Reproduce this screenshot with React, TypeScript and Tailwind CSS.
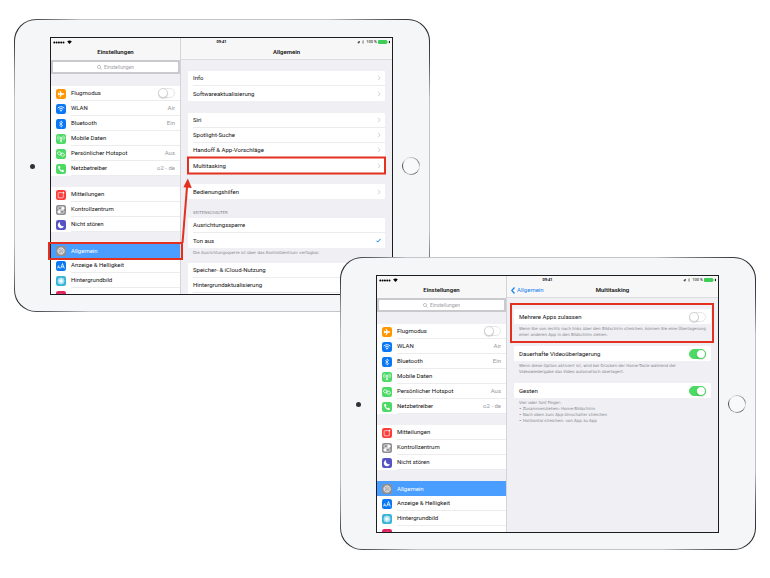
import type { ReactNode } from "react";

type IconName =
  | "plane"
  | "wifi"
  | "bluetooth"
  | "antenna"
  | "hotspot"
  | "phone"
  | "notifications"
  | "control"
  | "moon"
  | "gear"
  | "display"
  | "wallpaper"
  | "sounds";

interface SidebarItem {
  icon: IconName;
  label: string;
  value?: string;
  toggle?: boolean;
  active?: boolean;
}

const sidebarGroups: SidebarItem[][] = [
  [
    { icon: "plane", label: "Flugmodus", toggle: true },
    { icon: "wifi", label: "WLAN", value: "Air" },
    { icon: "bluetooth", label: "Bluetooth", value: "Ein" },
    { icon: "antenna", label: "Mobile Daten" },
    { icon: "hotspot", label: "Persönlicher Hotspot", value: "Aus" },
    { icon: "phone", label: "Netzbetreiber", value: "o2 - de" },
  ],
  [
    { icon: "notifications", label: "Mitteilungen" },
    { icon: "control", label: "Kontrollzentrum" },
    { icon: "moon", label: "Nicht stören" },
  ],
  [
    { icon: "gear", label: "Allgemein", active: true },
    { icon: "display", label: "Anzeige & Helligkeit" },
    { icon: "wallpaper", label: "Hintergrundbild" },
    { icon: "sounds", label: "" },
  ],
];

const iconColors: Record<IconName, string> = {
  plane: "#ff9500",
  wifi: "#0a78f5",
  bluetooth: "#0a78f5",
  antenna: "#4cd964",
  hotspot: "#4cd964",
  phone: "#4cd964",
  notifications: "#fc3d39",
  control: "#8e8e93",
  moon: "#5654c4",
  gear: "#8e8e93",
  display: "#0a78f5",
  wallpaper: "#36b4d8",
  sounds: "#e0245e",
};

const iconShapes: Record<IconName, ReactNode> = {
  plane: (
    <path
      d="M25 15c0-1.200-1.200-1.900-2.400-1.900h-4.800L13 5h-2.600l2.200 8.100H9L7.200 10.500H5l1.200 4.500L5 19.500h2.200L9 16.900h3.600L10.400 25H13l4.800-8.100h4.800c1.200 0 2.400-.7 2.400-1.900z"
      fill="#fff"
    />
  ),
  wifi: (
    <g stroke="#fff" strokeWidth="2.6" fill="none">
      <path d="M5 12.2c5.6-5.4 14.4-5.4 20 0" />
      <path d="M8.6 16.2c3.6-3.4 9.2-3.4 12.8 0" />
      <path d="M12 19l3 3.6 3-3.6c-1.8-1.4-4.2-1.4-6 0z" fill="#fff" strokeWidth="0.8" />
    </g>
  ),
  bluetooth: (
    <path d="M9.5 10.2l10.5 9.6-5 4.6V5.6l5 4.6-10.5 9.6" stroke="#fff" strokeWidth="2" fill="none" />
  ),
  antenna: (
    <g stroke="#fff" strokeWidth="1.8" fill="none">
      <circle cx="15" cy="11.5" r="2.2" fill="#fff" />
      <path d="M15 13v12M12 25l3-9 3 9" />
      <path d="M10.6 16a6 6 0 010-9M19.4 16a6 6 0 000-9M7.4 18.6a10 10 0 010-14M22.6 18.6a10 10 0 000-14" />
    </g>
  ),
  hotspot: (
    <g stroke="#fff" strokeWidth="2.2" fill="none">
      <rect x="4.5" y="9" width="12" height="8.4" rx="4.2" transform="rotate(20 10.5 13)" />
      <rect x="13.2" y="12.6" width="12" height="8.4" rx="4.2" transform="rotate(20 19.5 17)" />
    </g>
  ),
  phone: (
    <path
      d="M9.6 5.6L6.4 8c-.8 5.600 7.600 16.200 14.800 16.400L24 21.600c.4-.6.3-1.200-.2-1.600l-3.600-2.600c-.6-.4-1.200-.3-1.700.2l-1.500 1.600c-2.400-.8-5.200-4-6-6.400l1.700-1.400c.5-.5.7-1 .3-1.700L11.200 6c-.4-.6-1-.8-1.600-.4z"
      fill="#fff"
    />
  ),
  notifications: (
    <g>
      <rect x="6.500" y="8" width="15.500" height="15.500" rx="2.500" stroke="#fff" strokeWidth="2" fill="none" />
      <circle cx="22" cy="8" r="4.600" fill="#fc3d39" />
      <circle cx="22" cy="8" r="3" fill="#fff" />
    </g>
  ),
  control: (
    <g stroke="#fff" strokeWidth="1.800" fill="none">
      <rect x="5.500" y="5.500" width="19" height="8" rx="4" />
      <circle cx="20.500" cy="9.500" r="3.600" fill="#fff" />
      <rect x="5.500" y="16.500" width="19" height="8" rx="4" />
      <circle cx="9.500" cy="20.500" r="3.600" fill="#fff" />
    </g>
  ),
  moon: <path d="M12.500 6a9.500 9.500 0 1011.400 12.200A9.200 9.200 0 0112.500 6z" fill="#fff" />,
  gear: (
    <g stroke="#fff" fill="none">
      <circle cx="15" cy="15" r="9.600" strokeWidth="2.800" strokeDasharray="2 1" />
      <circle cx="15" cy="15" r="8.400" strokeWidth="1.600" />
      <circle cx="15" cy="15" r="4" strokeWidth="1.800" />
      <path d="M17 18.500l3 4.500M17 11.500l3-4.500M11 15H6" strokeWidth="1.500" />
    </g>
  ),
  display: (
    <g stroke="#fff" strokeWidth="2.400" fill="none">
      <path d="M14 22.500l5.500-15 5.500 15M16 17.500h7" />
      <path d="M4.500 22l3.300-8.500L11 22M5.500 19.300h4.600" strokeWidth="1.900" />
    </g>
  ),
  wallpaper: (
    <g stroke="#fff" fill="none" strokeWidth="1.600">
      <circle cx="15" cy="15" r="3" fill="#fff" />
      <ellipse cx="15" cy="15" rx="4" ry="10" />
      <ellipse cx="15" cy="15" rx="4" ry="10" transform="rotate(45 15 15)" />
      <ellipse cx="15" cy="15" rx="4" ry="10" transform="rotate(90 15 15)" />
      <ellipse cx="15" cy="15" rx="4" ry="10" transform="rotate(135 15 15)" />
    </g>
  ),
  sounds: <path d="M6 12h4l6-5v16l-6-5H6z" fill="#fff" />,
};

function AppIcon({ name }: { name: IconName }) {
  return (
    <svg viewBox="0 0 30 30" className="size-2.5 shrink-0" aria-hidden="true">
      <rect width="30" height="30" rx="6.500" fill={iconColors[name]} />
      {iconShapes[name]}
    </svg>
  );
}

function Chevron() {
  return (
    <svg viewBox="0 0 4 6" className="h-1.5 w-1 shrink-0" aria-hidden="true">
      <path d="M1 .8L3.200 3 1 5.200" stroke="#c3c3c8" strokeWidth=".8" fill="none" />
    </svg>
  );
}

function Toggle({ label, on = false }: { label: string; on?: boolean }) {
  return (
    <input
      type="checkbox"
      role="switch"
      aria-label={label}
      defaultChecked={on}
      className="relative h-2.5 w-[17px] shrink-0 appearance-none rounded-full border border-[#e6e6e9] bg-white before:absolute before:-top-px before:-left-px before:size-2.5 before:rounded-full before:border before:border-[#d4d4d8] before:bg-white before:shadow-[0_1px_1px_rgba(0,0,0,0.15)] checked:border-[#4cd964] checked:bg-[#4cd964] checked:before:left-[6px] checked:before:border-[#4cd964]"
    />
  );
}

function StatusBar() {
  return (
    <div className="absolute inset-x-0 top-0 grid h-2 grid-cols-3 items-center px-0.5 text-[4px] leading-[8px] font-semibold text-black">
      <div className="flex items-center gap-0.5">
        <svg viewBox="0 0 12 3" className="h-[3px] w-3" aria-label="Signal">
          {[1.3, 3.6, 5.9, 8.2, 10.5].map((x) => (
            <circle key={x} cx={x} cy="1.500" r="1" />
          ))}
        </svg>
        <svg viewBox="0 0 12 9" className="h-[4px] w-[5px]" aria-label="WLAN">
          <path d="M.5 3C3.500 0 8.500 0 11.500 3L6 9z" />
        </svg>
      </div>
      <span className="text-center">09:41</span>
      <div className="flex items-center justify-end gap-px font-normal">
        <svg viewBox="0 0 8 8" className="size-[3px]" aria-hidden="true">
          <path d="M8 0L5 8 4 4 0 3z" />
        </svg>
        <svg viewBox="0 0 6 10" className="h-[4px] w-1" aria-hidden="true">
          <path d="M1 2.500l4 5L3 9.500v-9l2 2-4 5" stroke="#777" fill="none" />
        </svg>
        <span>100 %</span>
        <svg viewBox="0 0 12 4" className="h-1 w-3" aria-label="Batterie">
          <rect width="9" height="4" rx="1" fill="#3fce55" />
          <rect x="9.300" y="1.300" width=".7" height="1.400" fill="#3fce55" />
          <path d="M12 .5v3L10.500 2z" />
        </svg>
      </div>
    </div>
  );
}

function SidebarRow({ item }: { item: SidebarItem }) {
  const body = (
    <>
      <AppIcon name={item.icon} />
      <span
        className={
          item.active
            ? "flex h-full flex-1 items-center justify-between pr-[5px] text-white"
            : "flex h-full flex-1 items-center justify-between border-b border-[#ececef] pr-[5px] text-[#111]"
        }
      >
        {item.label}
        {item.value && <span className="text-[#98989d]">{item.value}</span>}
        {item.toggle && <Toggle label={item.label} />}
      </span>
    </>
  );
  const base = "flex h-[15px] items-center gap-[5px] pl-[5px]";
  if (item.toggle) {
    return <label className={base}>{body}</label>;
  }
  return (
    <a href="#" className={item.active ? `${base} bg-[#4a9eff]` : base}>
      {body}
    </a>
  );
}

function Sidebar() {
  return (
    <aside className="flex w-[130px] shrink-0 flex-col border-r border-[#d3d3d8]">
      <h2 className="h-[22px] shrink-0 bg-[#f7f7f8] pt-2 text-center leading-[12px] font-semibold">
        Einstellungen
      </h2>
      <div className="h-3.5 shrink-0 bg-[#c9c9ce] p-0.5">
        <label className="flex h-2.5 items-center justify-center gap-0.5 rounded-[1px] bg-white">
          <svg viewBox="0 0 10 10" className="size-[5px]" aria-hidden="true">
            <circle cx="4" cy="4" r="3.200" stroke="#8e8e93" fill="none" />
            <path d="M6.500 6.500L9.500 9.500" stroke="#8e8e93" />
          </svg>
          <input
            type="search"
            aria-label="Einstellungen durchsuchen"
            placeholder="Einstellungen"
            className="field-sizing-content text-[5px] leading-[8px] outline-none placeholder:text-[#a0a0a5]"
          />
        </label>
      </div>
      <nav className="flex flex-col gap-[11px] pt-3">
        {sidebarGroups.map((group) => (
          <div key={group[0].label} className="bg-white">
            {group.map((item) => (
              <SidebarRow key={item.icon} item={item} />
            ))}
          </div>
        ))}
      </nav>
    </aside>
  );
}

function Card({ children }: { children: ReactNode }) {
  return <div className="rounded-[1px] bg-white pl-[5px]">{children}</div>;
}

function Row({ label, last = false, children }: { label: string; last?: boolean; children?: ReactNode }) {
  return (
    <a
      href="#"
      className={
        last
          ? "flex h-[15px] items-center justify-between pr-1"
          : "flex h-[15px] items-center justify-between border-b border-[#ececef] pr-1"
      }
    >
      {label}
      {children}
    </a>
  );
}

function ToggleRow({ label, on }: { label: string; on?: boolean }) {
  return (
    <Card>
      <label className="flex h-[15px] items-center justify-between pr-[5px]">
        {label}
        <Toggle label={label} on={on} />
      </label>
    </Card>
  );
}

function Note({ children }: { children: ReactNode }) {
  return (
    <p className="pl-[5px] font-['DejaVu_Sans',sans-serif] text-[4px] leading-[6px] whitespace-nowrap text-[#85858b]">
      {children}
    </p>
  );
}

function PaneHeader({ title, back }: { title: string; back?: string }) {
  return (
    <header className="grid h-[22px] shrink-0 grid-cols-3 border-b border-[#dcdce0] bg-[#f7f7f8] pt-2 leading-[12px]">
      <div>
        {back && (
          <a href="#" className="flex items-center gap-0.5 pl-1 text-[#1580f0]">
            <svg viewBox="0 0 4 7" className="h-[7px] w-1" aria-hidden="true">
              <path d="M3.500 .5L.8 3.500l2.700 3" stroke="#1580f0" strokeWidth="1.200" fill="none" />
            </svg>
            {back}
          </a>
        )}
      </div>
      <h2 className="text-center font-semibold">{title}</h2>
    </header>
  );
}

function GeneralPane() {
  return (
    <>
      <PaneHeader title="Allgemein" />
      <div className="flex flex-col px-[7px] pt-[11px]">
        <Card>
          <Row label="Info"><Chevron /></Row>
          <Row label="Softwareaktualisierung" last><Chevron /></Row>
        </Card>
        <div className="pt-3">
          <Card>
            <Row label="Siri"><Chevron /></Row>
            <Row label="Spotlight-Suche"><Chevron /></Row>
            <Row label="Handoff & App-Vorschläge"><Chevron /></Row>
            <Row label="Multitasking" last><Chevron /></Row>
          </Card>
        </div>
        <div className="pt-[11px]">
          <Card>
            <Row label="Bedienungshilfen" last><Chevron /></Row>
          </Card>
        </div>
        <div className="pt-[11px] pb-0.5">
          <Note>SEITENSCHALTER</Note>
        </div>
        <Card>
          <Row label="Ausrichtungssperre" />
          <Row label="Ton aus" last>
            <svg viewBox="0 0 5 5" className="size-[5px]" aria-label="Ausgewählt">
              <path d="M.5 2.700l1.300 1.400L4.500 .8" stroke="#1580f0" fill="none" />
            </svg>
          </Row>
        </Card>
        <div className="pt-0.5 pb-[7px]">
          <Note>Die Ausrichtungssperre ist über das Kontrollzentrum verfügbar.</Note>
        </div>
        <Card>
          <Row label="Speicher- & iCloud-Nutzung" />
          <Row label="Hintergrundaktualisierung" />
          <div className="h-1" />
        </Card>
      </div>
    </>
  );
}

function MultitaskingPane() {
  return (
    <>
      <PaneHeader title="Multitasking" back="Allgemein" />
      <div className="flex flex-col gap-2 px-[7px] pt-[11px]">
        <div className="flex flex-col gap-0.5">
          <ToggleRow label="Mehrere Apps zulassen" />
          <Note>
            Wenn Sie von rechts nach links über den Bildschirm streichen, können Sie eine Überlagerung
            <br />
            einer anderen App in den Bildschirm ziehen.
          </Note>
        </div>
        <div className="flex flex-col gap-0.5">
          <ToggleRow label="Dauerhafte Videoüberlagerung" on />
          <Note>
            Wenn diese Option aktiviert ist, wird bei Drücken der Home-Taste während der
            <br />
            Videowiedergabe das Video automatisch überlagert.
          </Note>
        </div>
        <div className="flex flex-col gap-0.5">
          <ToggleRow label="Gesten" on />
          <Note>
            Vier oder fünf Finger:
            <br />• Zusammenziehen: Home-Bildschirm
            <br />• Nach oben zum App-Umschalter streichen
            <br />• Horizontal streichen: von App zu App
          </Note>
        </div>
      </div>
    </>
  );
}

function Tablet({ children, marks }: { children: ReactNode; marks: ReactNode }) {
  return (
    <section className="relative w-[416px] rounded-[22px] bg-[conic-gradient(#c4c7ca_0deg,#c4c7ca_36deg,#4a4d50_50deg,#17191b_56deg,#4a4d50_63deg,#c0c3c6_72deg,#c0c3c6_108deg,#4a4d50_117deg,#17191b_124deg,#4a4d50_130deg,#c4c7ca_142deg,#c4c7ca_222deg,#4a4d50_232deg,#17191b_236deg,#8e9194_243deg,#c0c3c6_250deg,#c0c3c6_288deg,#8e9194_295deg,#17191b_303deg,#4a4d50_308deg,#c4c7ca_316deg,#c4c7ca_360deg)] p-px">
      <div className="flex items-center rounded-[21px] bg-[#f5f6f8] pt-[17px] pb-4">
        <div className="flex w-[35px] justify-center">
          <span className="size-[5px] rounded-full bg-[#2f3236]" />
        </div>
        <div className="relative flex h-[258px] w-[343px] overflow-hidden border border-[#1c1d20] bg-[#efeff4] text-[6px] leading-[8px] text-[#111]">
          <Sidebar />
          <main className="min-w-0 flex-1">{children}</main>
          <StatusBar />
        </div>
        <div className="flex flex-1 justify-center">
          <button
            type="button"
            aria-label="Home"
            className="size-[18px] rounded-full bg-[conic-gradient(#c4c6c8,#6a6c6f_60deg,#e2e3e5_100deg,#55585b_150deg,#b8babc_200deg,#44474a_270deg,#e2e3e5_320deg,#c4c6c8)] p-px"
          >
            <span className="block size-full rounded-full bg-[#f8f9fa]" />
          </button>
        </div>
      </div>
      <svg viewBox="0 0 416 293" className="pointer-events-none absolute top-0 left-0 w-full" aria-hidden="true">
        {marks}
      </svg>
    </section>
  );
}

export default function App() {
  return (
    <div className="relative min-h-screen bg-white font-['Roboto','Liberation_Sans',sans-serif]">
      <div className="absolute top-[19px] left-[14px]">
        <Tablet
          marks={
            <g stroke="#e3301f" strokeWidth="2" fill="none">
              <rect x="174" y="138.500" width="197" height="16" />
              <rect x="35" y="224" width="133" height="16" />
              <path d="M168.500 224L173 168" />
              <path d="M173.800 159.500l4 9.500-8.400-.7z" fill="#e3301f" stroke="none" />
            </g>
          }
        >
          <GeneralPane />
        </Tablet>
      </div>
      <div className="absolute top-[257px] left-[340px]">
        <Tablet marks={<rect x="171" y="47" width="202" height="38" stroke="#e3301f" strokeWidth="2" fill="none" />}>
          <MultitaskingPane />
        </Tablet>
      </div>
    </div>
  );
}
